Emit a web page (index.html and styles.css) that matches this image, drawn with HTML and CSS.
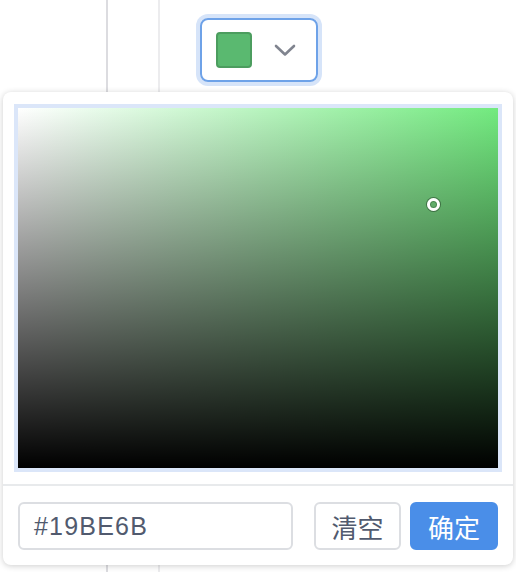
FILE: index.html
```html
<!DOCTYPE html>
<html lang="zh">
<head>
<meta charset="utf-8">
<title>Color Picker</title>
<link rel="stylesheet" href="styles.css">
</head>
<body>
<div class="page">
  <div class="col col-a"></div>
  <div class="col col-b"></div>
  <div class="col col-c">
    <div class="trigger">
      <span class="swatch"></span>
      <svg class="chev" width="22" height="14" viewBox="0 0 22 14">
        <path d="M2 3 L11 11.5 L20 3" fill="none" stroke="#80848f" stroke-width="2.6" stroke-linecap="round" stroke-linejoin="round"/>
      </svg>
    </div>
  </div>
</div>
<div class="panel">
  <div class="sat-wrap">
    <div class="sat">
      <span class="cursor"></span>
    </div>
  </div>
  <div class="footer">
    <div class="hex">#19BE6B</div>
    <div class="btns">
      <button class="btn btn-clear">清空</button>
      <button class="btn btn-ok">确定</button>
    </div>
  </div>
</div>
</body>
</html>
```
FILE: styles.css
```css
html, body {
  margin: 0;
  padding: 0;
  background: #fff;
  font-family: "Liberation Sans", "Noto Sans CJK SC", sans-serif;
}
.page {
  display: flex;
  height: 572px;
  overflow: hidden;
}
.col {
  height: 100%;
  box-sizing: border-box;
}
.col-a {
  width: 108px;
  border-right: 2px solid #dcdce0;
}
.col-b {
  width: 52px;
  border-right: 2px solid #ececee;
}
.col-c {
  flex: 1;
  padding: 18px 0 0 40px;
}
.trigger {
  width: 118px;
  height: 64px;
  box-sizing: border-box;
  border: 2px solid #6ea2e8;
  border-radius: 8px;
  box-shadow: 0 0 0 4px #d6e4f9;
  display: flex;
  align-items: center;
  padding-left: 14px;
  gap: 22px;
}
.swatch {
  width: 36px;
  height: 36px;
  box-sizing: border-box;
  background: #5ab970;
  border: 2px solid #4c9d5f;
  border-radius: 4px;
}
.chev {
  display: block;
}
.panel {
  position: absolute;
  left: 3px;
  top: 92px;
  width: 510px;
  height: 473px;
  background: #fff;
  border-radius: 8px;
  box-shadow: 0 1px 6px rgba(0,0,0,0.2);
  box-sizing: border-box;
}
.sat-wrap {
  padding: 12px 11px;
}
.sat {
  position: relative;
  width: 480px;
  height: 360px;
  border: 4px solid #dbe6f9;
  background:
    linear-gradient(to top, #000 0%, rgba(0,0,0,0) 100%),
    linear-gradient(to right, #fff 0%, #72ea7f 100%);
}
.cursor {
  position: absolute;
  left: 409px;
  top: 90px;
  width: 13px;
  height: 13px;
  box-sizing: border-box;
  border-radius: 50%;
  border: 3px solid #fff;
  box-shadow: 0 0 0 1px rgba(0,0,0,0.35), inset 0 0 0 1px rgba(0,0,0,0.25);
}
.footer {
  border-top: 2px solid #e8eaec;
  padding: 16px 15px 15px;
  display: flex;
  align-items: center;
}
.hex {
  width: 275px;
  height: 48px;
  box-sizing: border-box;
  border: 2px solid #dcdee2;
  border-radius: 6px;
  padding-left: 14px;
  display: flex;
  align-items: center;
  font-size: 25px;
  letter-spacing: 1.2px;
  color: #515a6e;
}
.btns {
  margin-left: auto;
  display: flex;
  gap: 9px;
}
.btn {
  height: 48px;
  box-sizing: border-box;
  border-radius: 6px;
  font-family: "Noto Sans CJK SC", sans-serif;
  font-size: 26px;
  padding: 0;
  display: flex;
  align-items: center;
  justify-content: center;
}
.btn-clear {
  width: 87px;
  background: #fff;
  border: 2px solid #dcdee2;
  color: #515a6e;
}
.btn-ok {
  width: 88px;
  background: #4a8ee8;
  border: 2px solid #4a8ee8;
  color: #fff;
}
```
